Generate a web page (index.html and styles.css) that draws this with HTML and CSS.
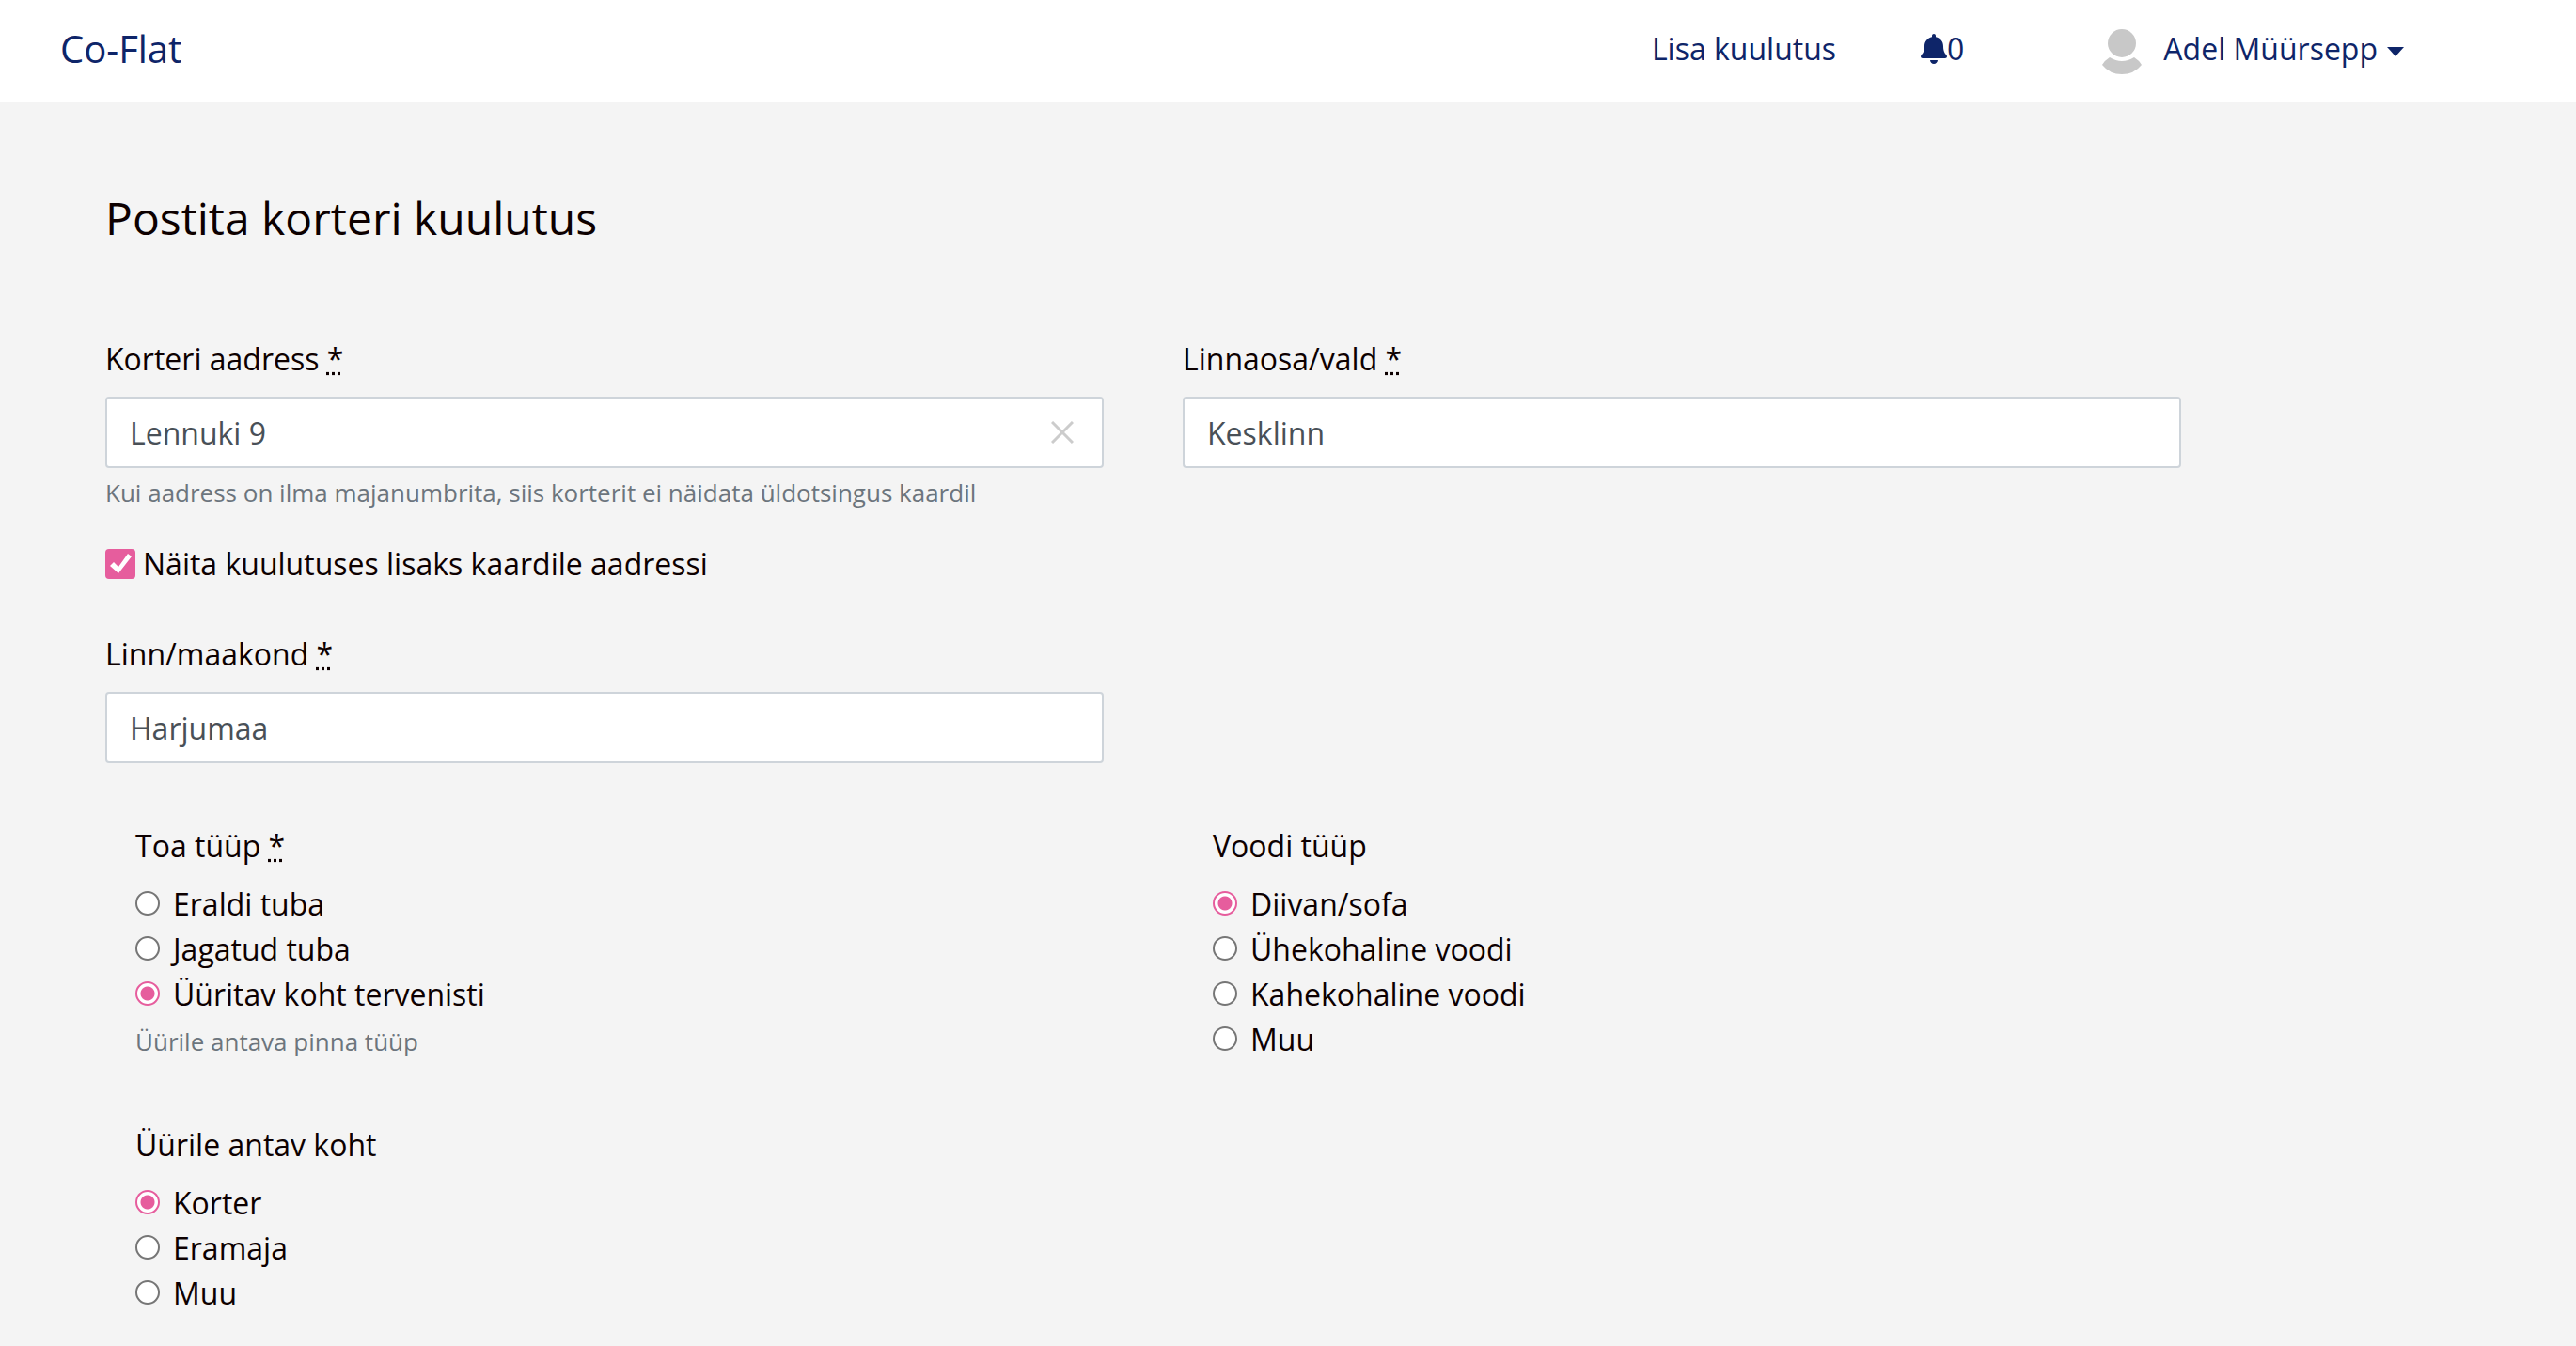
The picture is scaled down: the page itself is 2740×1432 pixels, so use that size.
FILE: index.html
```html
<!DOCTYPE html>
<html lang="et">
<head>
<meta charset="utf-8">
<title>Co-Flat</title>
<link rel="stylesheet" href="styles.css">
</head>
<body>
<header class="navbar">
  <a class="brand" href="#">Co-Flat</a>
  <nav class="nav">
    <a class="nav-link" href="#">Lisa kuulutus</a>
    <a class="nav-link bell-link" href="#"><svg class="bell" viewBox="0 0 448 512" aria-hidden="true"><path fill="currentColor" d="M224 512c35.32 0 63.97-28.65 63.97-64H160.03c0 35.35 28.65 64 63.97 64zm215.39-149.71c-19.32-20.76-55.47-51.99-55.47-154.29 0-77.7-54.48-139.9-127.94-155.16V32c0-17.67-14.32-32-31.98-32s-31.98 14.33-31.98 32v20.84C118.56 68.1 64.08 130.3 64.08 208c0 102.3-36.15 133.53-55.47 154.29-6 6.45-8.66 14.16-8.61 21.71.11 16.4 12.98 32 32.1 32h383.8c19.12 0 32-15.6 32.1-32 .05-7.55-2.61-15.27-8.61-21.71z"/></svg>0</a>
    <button class="user" type="button"><svg class="avatar" viewBox="0 0 44 50" aria-hidden="true"><g fill="#c8c8c8"><circle cx="22" cy="16" r="15"/><path d="M9 31Q22 39 35 31Q40 34 43 39Q35 49 22 49Q9 49 1 39Q4 34 9 31z"/></g></svg><span>Adel Müürsepp</span><svg class="caret" viewBox="0 0 18 10" aria-hidden="true"><path fill="currentColor" d="M0 0h18L9 10z"/></svg></button>
  </nav>
</header>
<main class="page">
  <h1 class="title">Postita korteri kuulutus</h1>
  <form class="form">
    <div class="row">
      <div class="col">
        <label class="label" for="address">Korteri aadress <abbr title="kohustuslik">*</abbr></label>
        <div class="search">
          <input class="control" id="address" type="text" value="Lennuki 9">
          <button class="clear" type="button" aria-label="Tühjenda"><svg viewBox="0 0 24 24" aria-hidden="true"><path d="M1 1l22 22M23 1L1 23" stroke="#ccc" stroke-width="3"/></svg></button>
        </div>
        <small class="hint">Kui aadress on ilma majanumbrita, siis korterit ei näidata üldotsingus kaardil</small>
        <label class="check"><input class="checkbox" type="checkbox" checked>Näita kuulutuses lisaks kaardile aadressi</label>
      </div>
      <div class="col">
        <label class="label" for="district">Linnaosa/vald <abbr title="kohustuslik">*</abbr></label>
        <input class="control" id="district" type="text" value="Kesklinn">
      </div>
      <div class="col">
        <label class="label" for="county">Linn/maakond <abbr title="kohustuslik">*</abbr></label>
        <input class="control" id="county" type="text" value="Harjumaa">
      </div>
    </div>
    <div class="row choices">
      <fieldset class="group">
        <legend class="legend">Toa tüüp <abbr title="kohustuslik">*</abbr></legend>
        <label class="option"><input class="radio" type="radio" name="room">Eraldi tuba</label>
        <label class="option"><input class="radio" type="radio" name="room">Jagatud tuba</label>
        <label class="option"><input class="radio" type="radio" name="room" checked>Üüritav koht tervenisti</label>
        <small class="hint">Üürile antava pinna tüüp</small>
      </fieldset>
      <fieldset class="group">
        <legend class="legend">Voodi tüüp</legend>
        <label class="option"><input class="radio" type="radio" name="bed" checked>Diivan/sofa</label>
        <label class="option"><input class="radio" type="radio" name="bed">Ühekohaline voodi</label>
        <label class="option"><input class="radio" type="radio" name="bed">Kahekohaline voodi</label>
        <label class="option"><input class="radio" type="radio" name="bed">Muu</label>
      </fieldset>
      <fieldset class="group">
        <legend class="legend">Üürile antav koht</legend>
        <label class="option"><input class="radio" type="radio" name="place" checked>Korter</label>
        <label class="option"><input class="radio" type="radio" name="place">Eramaja</label>
        <label class="option"><input class="radio" type="radio" name="place">Muu</label>
      </fieldset>
    </div>
  </form>
</main>
</body>
</html>
```
FILE: styles.css
```css
* {
  box-sizing: border-box;
}

body {
  margin: 0;
  background: #f4f4f4;
  color: #0d0000;
  font: 32px/48px "Open Sans", "Noto Sans", sans-serif;
}

input,
button {
  font: inherit;
  margin: 0;
}

.navbar {
  display: flex;
  align-items: center;
  justify-content: space-between;
  height: 108px;
  padding: 0 183px 4px 64px;
  background: #fff;
}

.navbar a,
.user {
  color: #0e2569;
  text-decoration: none;
}

.brand {
  font-size: 40px;
}

.nav {
  display: flex;
  align-items: center;
}

.bell-link {
  display: flex;
  align-items: center;
  margin: 0 146px 0 90px;
}

.bell {
  width: 28px;
  height: 32px;
}

.user {
  display: flex;
  align-items: center;
  padding: 0;
  border: 0;
  background: none;
}

.avatar {
  width: 44px;
  height: 50px;
  margin: 6px 22px 0 0;
}

.caret {
  width: 18px;
  height: 10px;
  margin: 6px 0 0 10px;
}

.page {
  padding: 90px 420px 40px 112px;
}

.title {
  margin: 0 0 92px;
  font-size: 48px;
  font-weight: 400;
  line-height: 68px;
}

.row {
  display: grid;
  grid-template-columns: 1fr 1fr;
  column-gap: 84px;
  row-gap: 48px;
}

.label,
.hint {
  display: block;
}

.label {
  margin-bottom: 16px;
}

.label abbr,
.legend abbr {
  text-decoration: underline dotted;
}

.search {
  position: relative;
}

.control {
  display: block;
  width: 100%;
  height: 76px;
  padding: 0 24px;
  border: 2px solid #ced4da;
  border-radius: 4px;
  background: #fff;
  color: #495057;
}

.clear {
  position: absolute;
  top: 0;
  right: 20px;
  display: flex;
  align-items: center;
  width: 48px;
  height: 100%;
  padding: 0 12px;
  border: 0;
  background: none;
}

.clear svg {
  width: 24px;
  height: 24px;
}

.hint {
  margin-top: 6px;
  color: #6c757d;
  font-size: 26px;
  line-height: 40px;
}

.check,
.option {
  display: flex;
  align-items: center;
}

.check {
  margin-top: 32px;
}

.checkbox,
.radio {
  appearance: none;
  border: 2px solid #767676;
  background: #fff;
}

.checkbox {
  width: 32px;
  height: 32px;
  margin-right: 8px;
  border-radius: 4px;
}

.checkbox:checked {
  border: 0;
  background: #e65d9d url("data:image/svg+xml,%3Csvg xmlns='http://www.w3.org/2000/svg' viewBox='0 0 32 32'%3E%3Cpath fill='%23fff' d='M5 18l4-4 5 5L24 5l4 3-14 18z'/%3E%3C/svg%3E");
}

.radio {
  width: 26px;
  height: 26px;
  margin: 0 14px 2px 0;
  border-radius: 50%;
}

.radio:checked {
  border-color: #e65d9d;
  background: radial-gradient(circle, #e65d9d 7px, #fff 8px);
}

.choices {
  row-gap: 64px;
  margin-top: 64px;
}

.group {
  min-width: 0;
  margin: 0;
  padding: 0 0 0 32px;
  border: 0;
}

.legend {
  margin-bottom: 14px;
  padding: 0;
}
```
